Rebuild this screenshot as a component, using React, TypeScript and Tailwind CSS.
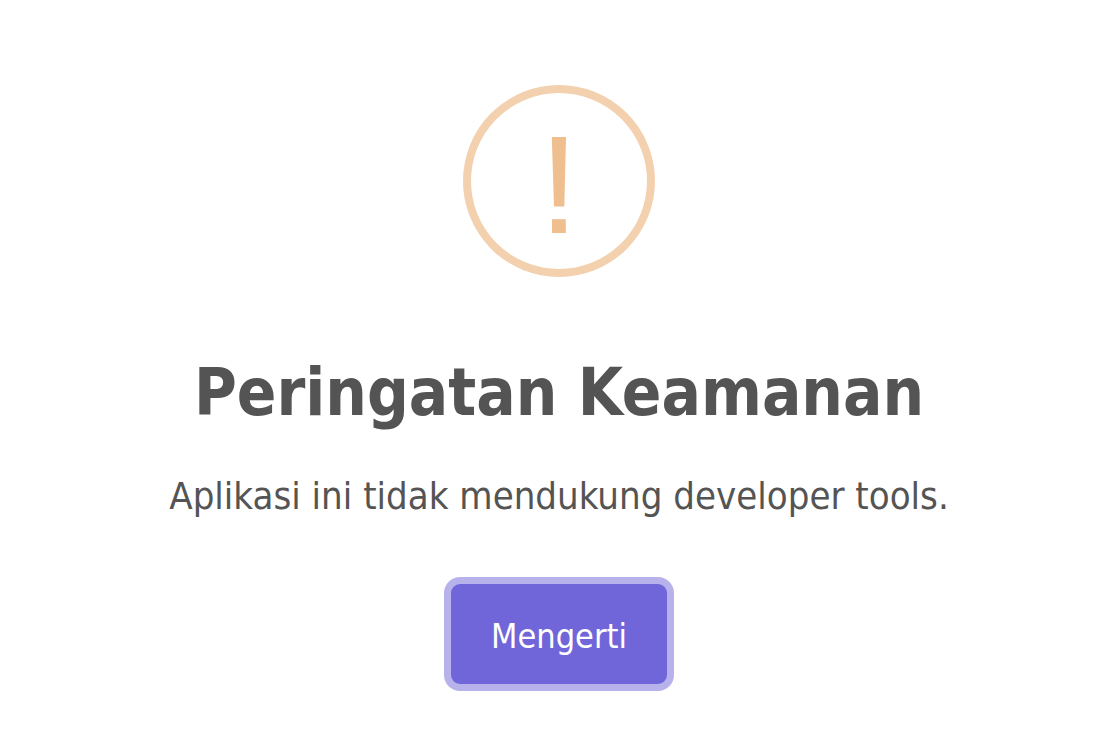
import React from "react";

const WarningIcon = () => {
  return (
    <svg
      viewBox="0 0 192 192"
      className="h-[192px] w-[192px]"
      role="img"
      aria-label="Warning"
    >
      <circle
        cx="96"
        cy="96"
        r="92"
        fill="none"
        stroke="#f3d0ae"
        strokeWidth="8"
      />
      <path d="M88.8 52h14.2l-1.7 69.5H91z" fill="#efbf90" />
      <path d="M89 134.2h13.8V148H89z" fill="#efbf90" />
    </svg>
  );
};

const App = () => {
  return (
    <main className="flex min-h-screen flex-col items-center bg-white px-8 pt-[85px] pb-[52px] font-['DejaVu_Sans_Condensed','DejaVu_Sans',sans-serif] text-[#545454]">
      <WarningIcon />
      <h1 className="mt-[72px] text-center text-[65px] leading-[88px] font-bold">
        Peringatan Keamanan
      </h1>
      <p className="mt-[31px] text-center text-[38px] leading-[56px]">
        Aplikasi ini tidak mendukung developer tools.
      </p>
      <button
        type="button"
        className="mt-[60px] h-[100px] rounded-[9px] bg-[#7066d9] px-10 pt-1 text-[34px] leading-[48px] text-white ring-[7px] ring-[#b7b2ec]"
      >
        Mengerti
      </button>
    </main>
  );
};

export default App;
